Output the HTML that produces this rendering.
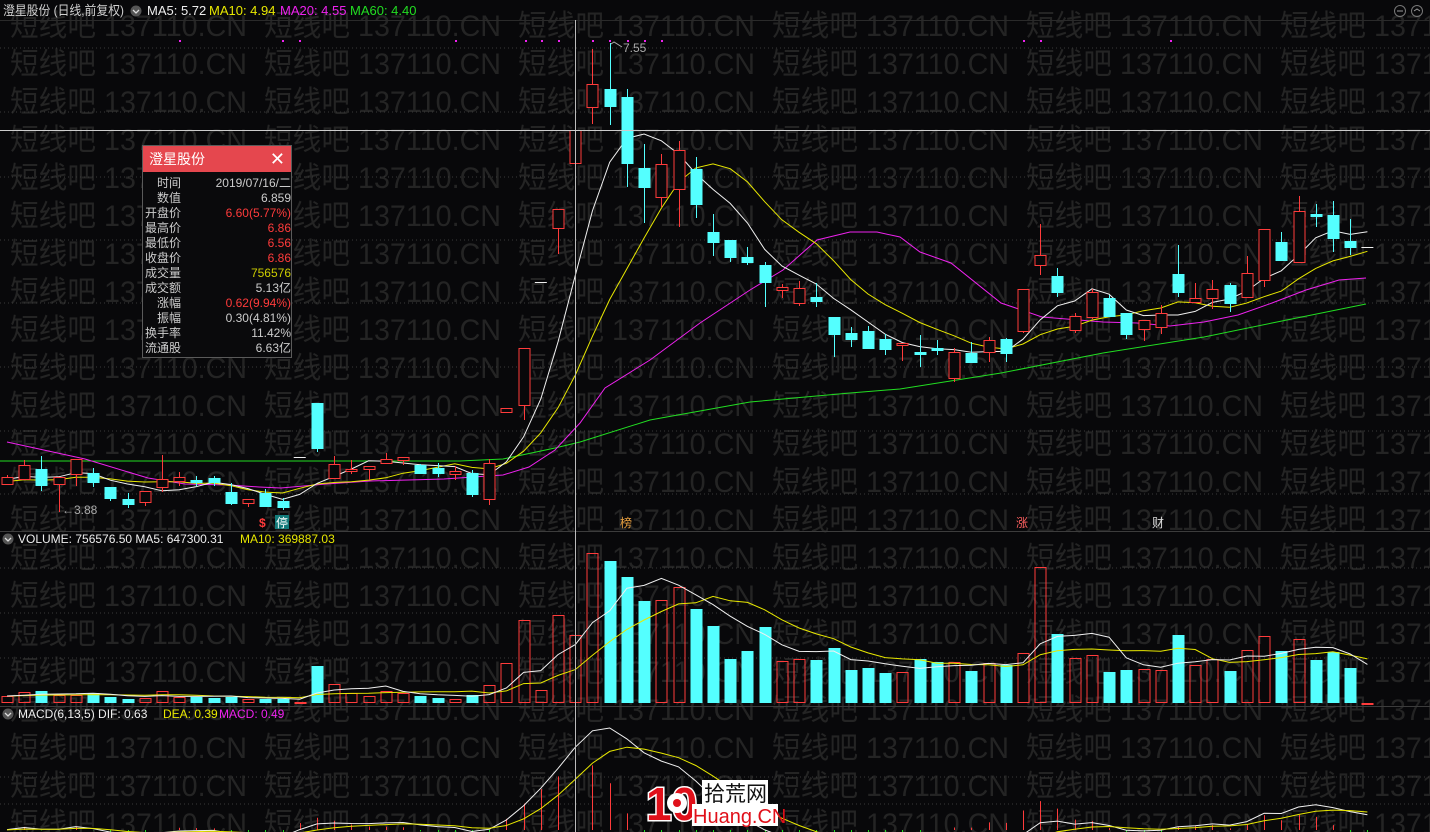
<!DOCTYPE html>
<html><head><meta charset="utf-8"><style>
html,body{margin:0;padding:0;background:#08080a;width:1430px;height:832px;overflow:hidden}
#c{position:absolute;left:0;top:0}
.t{font-family:"Liberation Sans","Noto Sans CJK SC",sans-serif}
#box{position:absolute;left:142px;top:145px;width:148px;height:211px;border:1px solid #5a5a5a;background:#0a0a0c;font-family:"Liberation Sans","Noto Sans CJK SC",sans-serif;font-size:12px;color:#ccc}
#box .h{height:26px;background:#e5474e;color:#fff;font-size:14px;line-height:26px;padding-left:6px;position:relative}
#box .h span{position:absolute;right:6px;top:0;font-size:18px}
#box .r{height:15px;line-height:15px;position:relative}
#box .r b{font-weight:normal;position:absolute;left:0;width:38px;text-align:right}
#box .r i{font-style:normal;position:absolute;right:0}
</style></head><body>
<svg id="c" width="1430" height="832" xmlns="http://www.w3.org/2000/svg"></svg>
<div id="box">
<div class="h">澄星股份<span>✕</span></div>
<div style="height:4px"></div>
<div class="r"><b>时间</b><i>2019/07/16/二</i></div>
<div class="r"><b>数值</b><i>6.859</i></div>
<div class="r"><b>开盘价</b><i style="color:#ff3b3b">6.60(5.77%)</i></div>
<div class="r"><b>最高价</b><i style="color:#ff3b3b">6.86</i></div>
<div class="r"><b>最低价</b><i style="color:#ff3b3b">6.56</i></div>
<div class="r"><b>收盘价</b><i style="color:#ff3b3b">6.86</i></div>
<div class="r"><b>成交量</b><i style="color:#cccc00">756576</i></div>
<div class="r"><b>成交额</b><i>5.13亿</i></div>
<div class="r"><b>涨幅</b><i style="color:#ff3b3b">0.62(9.94%)</i></div>
<div class="r"><b>振幅</b><i>0.30(4.81%)</i></div>
<div class="r"><b>换手率</b><i>11.42%</i></div>
<div class="r"><b>流通股</b><i>6.63亿</i></div>
</div>
<script>
var C=[
['r',477,484,475,485],['r',465,479,460,479],['c',469,485,456,491],['r',477,484,477,512],['r',459,474,459,486],
['c',473,482,468,487],['c',487,498,487,501],['c',499,504,493,508],['r',491,502,491,506],['r',479,487,455,492],
['r',477,481,472,486],['c',480,482,476,486],['c',478,482,476,486],['c',492,503,483,505],['r',499,503,499,507],
['c',493,506,489,506],['c',501,507,498,510],['w',457,457,457,457],['c',403,448,403,452],['r',464,478,456,478],
['r',469,471,460,474],['r',466,469,466,480],['r',459,463,453,463],['r',457,460,457,465],['c',465,473,464,473],
['c',468,473,463,477],['r',471,474,466,480],['c',473,494,470,497],['r',463,499,459,505],['r',408,412,408,412],
['r',348,405,348,420],['w',282,282,282,282],['r',209,228,209,254],['r',130,163,130,167],['r',84,107,49,124],
['c',89,106,43,125],['c',97,163,89,187],['c',168,187,144,223],['r',164,197,154,207],['r',150,189,141,227],
['c',169,204,157,218],['c',232,242,214,256],['c',240,257,240,262],['c',257,262,247,265],['c',265,282,262,307],
['r',287,290,284,298],['r',288,303,281,306],['c',297,301,283,307],['c',317,334,317,357],['c',333,339,327,347],
['c',331,348,326,349],['c',339,349,334,355],['r',343,345,343,361],['c',352,354,335,367],['c',348,350,340,355],
['r',352,378,348,382],['c',353,362,342,362],['r',340,352,337,362],['c',339,353,338,362],['r',289,331,289,333],
['r',255,265,224,275],['c',276,292,268,297],['r',316,330,313,333],['r',292,317,289,319],['c',298,316,295,316],
['c',313,334,313,339],['r',320,329,320,341],['r',313,327,305,334],['c',274,292,245,297],['r',298,302,283,303],
['r',289,298,280,309],['c',285,303,283,312],['r',273,297,256,297],['r',229,280,229,287],['c',242,260,232,261],
['r',211,262,196,262],['c',214,216,204,227],['c',215,238,201,252],['c',241,247,219,255],['w',247,247,247,247]];
var V=[696,692,691,695,695,693,697,699,698,691,697,697,698,697,699,699,699,702,666,684,693,696,691,693,696,698,699,695,685,663,620,690,615,635,553,561,577,601,600,587,609,626,659,651,627,661,659,660,648,670,668,673,672,659,662,662,671,663,665,653,567,634,658,655,672,670,669,670,635,665,659,671,650,636,651,639,660,652,668,703];
var X=function(i){return 7+17.22*i};
var s='';
for(var r=0;r<22;r++){var y=25+38*r+11;for(var m=0;m<6;m++){var x=10+254*m;s+='<text x="'+x+'" y="'+y+'" font-size="30" fill="#242424" class="t" textLength="237" lengthAdjust="spacingAndGlyphs">短线吧 137110.CN</text>';}}
[48,112,177,240,303,367,431,494,568,613,658,777,804].forEach(function(y){s+='<line x1="0" x2="1430" y1="'+y+'" y2="'+y+'" stroke="#3a3a3a" stroke-dasharray="1,3"/>';});
s+='<line x1="0" x2="1430" y1="531.5" y2="531.5" stroke="#3c3c3c"/><line x1="0" x2="1430" y1="706.5" y2="706.5" stroke="#3c3c3c"/><line x1="0" x2="1430" y1="20.5" y2="20.5" stroke="#2a2a2a"/>';
function poly(pts,col){return '<polyline fill="none" stroke="'+col+'" stroke-width="1" points="'+pts.map(function(p){return p[0].toFixed(1)+','+p[1].toFixed(1)}).join(' ')+'"/>';}
function ma(arr,n,pad){var o=[];for(var i=0;i<arr.length;i++){var t=0;for(var k=0;k<n;k++){var j=i-k;t+=j>=0?arr[j]:pad;}o.push([X(i),t/n]);}return o;}
var cl=C.map(function(c){return c[0]=='c'?c[2]:c[1]});
s+=poly([[0,461],[250,461],[460,461],[503,459],[555,448],[580,442],[650,420],[750,402],[850,393],[900,389],[1001,373],[1103,353],[1204,337],[1272,323],[1366,304]],'#22dd22');
s+=poly([[7,442],[85,459],[148,478],[185,484],[229,485],[259,487],[281,488],[326,484],[370,481],[444,479],[488,476],[503,475],[529,467],[555,450],[580,423],[605,388],[650,360],[700,323],[750,290],[783,270],[817,240],[850,232],[877,232],[900,237],[920,252],[951,263],[1001,303],[1042,317],[1103,322],[1137,323],[1170,326],[1204,322],[1238,315],[1272,303],[1306,290],[1339,280],[1366,278]],'#ee22ee');
s+=poly(ma(cl,10,482),'#e8e800');
s+=poly(ma(cl,5,480),'#f0f0f0');
C.forEach(function(c,i){var x=X(i);
 if(c[0]=='w'){s+='<line x1="'+(x-6)+'" x2="'+(x+6)+'" y1="'+c[1]+'.5" y2="'+c[1]+'.5" stroke="#eee"/>';return;}
 var col=c[0]=='r'?'#ff3b3b':'#54ffff';var xc=Math.round(x)+0.5;
 s+='<line x1="'+xc+'" x2="'+xc+'" y1="'+c[3]+'" y2="'+c[4]+'" stroke="'+col+'"/>';
 var h=Math.max(c[2]-c[1],1);
 if(c[0]=='r')s+='<rect x="'+(xc-5.5)+'" y="'+(c[1]+0.5)+'" width="11" height="'+h+'" fill="#08080a" stroke="'+col+'"/>';
 else s+='<rect x="'+(xc-6)+'" y="'+c[1]+'" width="12" height="'+(h+1)+'" fill="'+col+'"/>';
});
V.forEach(function(v,i){var x=Math.round(X(i))+0.5;var col=C[i][0]=='c'?'#54ffff':'#ff3b3b';
 if(C[i][0]=='c')s+='<rect x="'+(x-6)+'" y="'+v+'" width="12" height="'+(703-v)+'" fill="'+col+'"/>';
 else s+='<rect x="'+(x-5.5)+'" y="'+(v+0.5)+'" width="11" height="'+Math.max(703-v-1,1)+'" fill="none" stroke="'+col+'"/>';});
var vv=V.map(function(v){return 703-v});
function mav(n){return ma(vv,n,vv[0]).map(function(p){return [p[0],703-p[1]]});}
s+=poly(mav(10),'#e8e800');s+=poly(mav(5),'#f0f0f0');
function ema(a,n){var o=[],e=a[0],k=2/(n+1);a.forEach(function(v){e=e+k*(v-e);o.push(e)});return o;}
var pr=cl.map(function(y){return -y});var pad=[];for(var i=0;i<30;i++)pad.push(-480);var pp=pad.concat(pr);
var e6=ema(pp,6),e13=ema(pp,13);var dif=e6.map(function(v,i){return v-e13[i]});var dea=ema(dif,5);
dif=dif.slice(30);dea=dea.slice(30);var mx=Math.max.apply(null,dif);var k=(830-728)/mx;var Z=830;
dif.forEach(function(d,i){var m=2*(d-dea[i]);var x=Math.round(X(i))+0.5;var y=Z-k*m;s+='<line x1="'+x+'" x2="'+x+'" y1="'+Z+'" y2="'+y+'" stroke="'+(m>0?'#ff3b3b':'#22dd22')+'"/>';});
s+=poly(dif.map(function(d,i){return [X(i),Z-k*d]}),'#f0f0f0');
s+=poly(dea.map(function(d,i){return [X(i),Z-k*d]}),'#e8e800');
s+='<line x1="575.5" x2="575.5" y1="20" y2="832" stroke="#bbb"/><line x1="0" x2="1430" y1="130.5" y2="130.5" stroke="#ccc"/>';
[179,282,299,455,525,541,558,592,609,627,644,661,1023,1040,1170].forEach(function(x){s+='<rect x="'+x+'" y="40" width="2" height="2" fill="#ee22ee"/>';});
s+='<text x="3" y="15" font-size="13" fill="#d0d0d0" class="t" textLength="121" lengthAdjust="spacingAndGlyphs">澄星股份 (日线,前复权)</text>';
s+='<circle cx="136" cy="11" r="5.5" fill="#555"/><path d="M133,10 l3,3 l3,-3" stroke="#ddd" fill="none" stroke-width="1.3"/>';
s+='<text y="15" font-size="13" class="t"><tspan x="147" fill="#eee">MA5: 5.72</tspan><tspan x="209" fill="#e8e800">MA10: 4.94</tspan><tspan x="280" fill="#ee22ee">MA20: 4.55</tspan><tspan x="350" fill="#22dd22">MA60: 4.40</tspan></text>';
s+='<circle cx="1400" cy="11" r="5.5" fill="none" stroke="#777"/><circle cx="1417" cy="11" r="5.5" fill="none" stroke="#777"/><path d="M1397,11 h6 M1414,11 l3,-2 l3,2" stroke="#999" fill="none"/>';
s+='<circle cx="8" cy="539" r="5.5" fill="#555"/><path d="M5,538 l3,3 l3,-3" stroke="#ddd" fill="none" stroke-width="1.3"/>';
s+='<text y="543" font-size="12" class="t"><tspan x="18" fill="#eee">VOLUME: 756576.50  MA5: 647300.31</tspan><tspan x="240" fill="#e8e800">MA10: 369887.03</tspan></text>';
s+='<circle cx="8" cy="714" r="5.5" fill="#555"/><path d="M5,713 l3,3 l3,-3" stroke="#ddd" fill="none" stroke-width="1.3"/>';
s+='<text y="718" font-size="12" class="t"><tspan x="18" fill="#eee">MACD(6,13,5)  DIF: 0.63</tspan><tspan x="163" fill="#e8e800">DEA: 0.39</tspan><tspan x="219" fill="#ee22ee">MACD: 0.49</tspan></text>';
s+='<text x="62" y="514" font-size="12" fill="#aaa" class="t">←3.88</text>';
s+='<path d="M611,44 l3,-2 l8,5" stroke="#aaa" fill="none"/><text x="623" y="52" font-size="12" fill="#aaa" class="t">7.55</text>';
s+='<text x="259" y="527" font-size="12" fill="#ff3b3b" font-weight="bold" class="t">$</text>';
s+='<rect x="275" y="515" width="14" height="14" fill="#127a7a"/><text x="276" y="527" font-size="12" fill="#fff" class="t">停</text>';
s+='<text x="620" y="527" font-size="12" fill="#e8a040" class="t">榜</text>';
s+='<text x="1016" y="527" font-size="12" fill="#ff6060" class="t">涨</text>';
s+='<text x="1152" y="527" font-size="12" fill="#ddd" class="t">财</text>';
s+='<text x="646" y="820" font-size="46" font-weight="bold" fill="#e0101a" stroke="#fff" stroke-width="3" paint-order="stroke" class="t">10</text>';
s+='<circle cx="677" cy="803" r="10" fill="#fff"/><circle cx="677" cy="803" r="4" fill="#e0101a"/>';
s+='<rect x="702" y="780" width="66" height="24" fill="#fff"/><text x="704" y="801" font-size="21" fill="#111" class="t">拾荒网</text>';
s+='<rect x="692" y="804" width="86" height="22" fill="#fff"/><text x="693" y="823" font-size="20" fill="#e0101a" class="t">Huang.CN</text>';
document.getElementById('c').innerHTML=s;
</script>
</body></html>
